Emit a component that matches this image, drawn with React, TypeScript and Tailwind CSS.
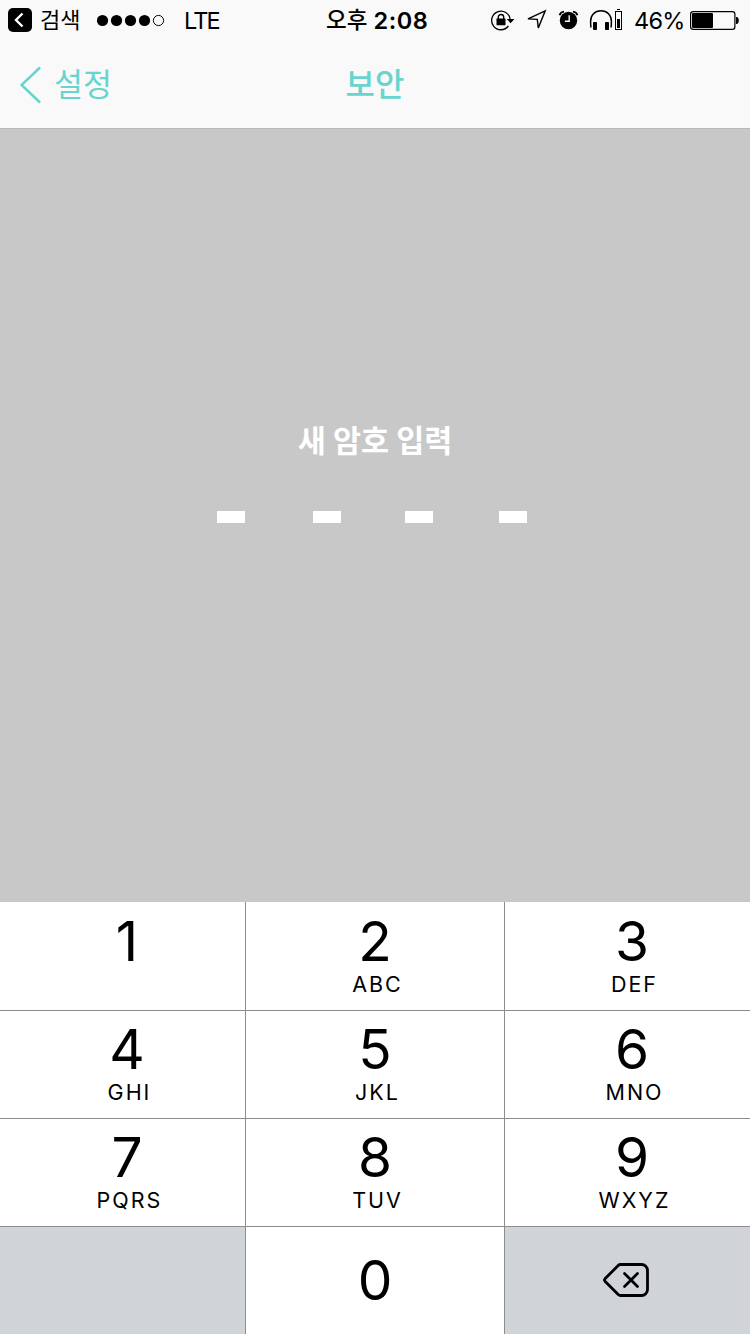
import React from "react";

type KeyDef = { digit: string; letters?: string };

const ROWS: KeyDef[][] = [
  [{ digit: "1" }, { digit: "2", letters: "ABC" }, { digit: "3", letters: "DEF" }],
  [{ digit: "4", letters: "GHI" }, { digit: "5", letters: "JKL" }, { digit: "6", letters: "MNO" }],
  [{ digit: "7", letters: "PQRS" }, { digit: "8", letters: "TUV" }, { digit: "9", letters: "WXYZ" }],
];

const COLUMN_PADDING = ["pl-[9px]", "", "pl-[9px]"];
const ROW_PADDING = ["pt-[11px]", "pt-[10px]", "pt-[10px]"];

function StatusIcons() {
  return (
    <svg className="block h-10 w-[134px] shrink-0" viewBox="490 0 134 40" fill="none" stroke="#000">
      {/* rotation lock */}
      <path d="M508.400 26A9.300 9.300 0 1 1 510.200 19.500" strokeWidth="1.300" />
      <path d="M506.800 19h7.600l-3.800 4.200z" fill="#000" stroke="none" />
      <path d="M498.300 19v-1.800a2.700 2.700 0 0 1 5.400 0V19" strokeWidth="1.400" />
      <rect x="496.500" y="18.600" width="9" height="6.600" rx="0.600" fill="#000" stroke="none" />
      {/* location */}
      <path d="M545.200 10.800 528 18.900l9.300.5 1 8.600z" strokeWidth="1.400" strokeLinejoin="miter" />
      {/* alarm */}
      <circle cx="568.500" cy="20.500" r="8.700" fill="#000" stroke="none" />
      <path d="M559.600 15.200a5 5 0 0 1 4.400-3.600M577.400 15.200a5 5 0 0 0-4.400-3.600" strokeWidth="1.800" />
      <path d="M569.200 15.200v6.100h-4.300" stroke="#f9f9f9" strokeWidth="1.400" />
      {/* headphones */}
      <path d="M591 27.500c-.3-1.700-.4-3.600-.4-6.200 0-6.300 4.200-10.500 10.400-10.500s10.400 4.200 10.400 10.500c0 2.600-.1 4.500-.4 6.200" strokeWidth="1.500" />
      <rect x="593" y="22" width="4" height="8" rx="0.800" fill="#000" stroke="none" />
      <rect x="605" y="22" width="4" height="8" rx="0.800" fill="#000" stroke="none" />
      <rect x="615.500" y="11.500" width="6" height="18" strokeWidth="1" />
      <path d="M617 9.500h3" strokeWidth="1" />
      <rect x="617" y="19" width="3" height="9" fill="#000" stroke="none" />
    </svg>
  );
}

function Battery() {
  return (
    <svg className="block h-10 w-[50px] shrink-0" viewBox="690 0 50 40" fill="none" stroke="#000">
      <rect x="690.600" y="11.600" width="44.300" height="17.800" rx="2.600" strokeWidth="1.200" />
      <rect x="692" y="13" width="21" height="15" rx="1" fill="#000" stroke="none" />
      <path d="M736 17h.5c1.500 0 2.300 1.500 2.300 3.500s-.8 3.500-2.300 3.500h-.5z" fill="#000" stroke="none" />
    </svg>
  );
}

function StatusBar() {
  return (
    <div className="flex h-10 items-center whitespace-nowrap pl-2 text-black">
      <svg className="h-6 w-6 shrink-0" viewBox="0 0 24 24" fill="none">
        <rect width="24" height="24" rx="5" fill="#000" />
        <path d="M14.500 5.500 8 12l6.500 6.500" stroke="#fff" strokeWidth="2.400" />
      </svg>
      <span className="ml-2 w-[57px] shrink-0 text-[22px] leading-10">검색</span>
      <svg className="h-10 w-[68px] shrink-0" viewBox="97 0 68 40">
        <circle cx="102.500" cy="20.500" r="5.600" />
        <circle cx="116.500" cy="20.500" r="5.600" />
        <circle cx="130.500" cy="20.500" r="5.600" />
        <circle cx="144.500" cy="20.500" r="5.600" />
        <circle cx="158.500" cy="20.500" r="5.100" fill="none" stroke="#000" />
      </svg>
      <span className="ml-[19px] w-[142px] shrink-0 pt-[2px] text-[23.500px] leading-10 tracking-[-1.900px]">LTE</span>
      <span className="flex w-[164px] shrink-0 items-center leading-10">
        <span className="text-[22.500px] font-medium">오후</span>
        <span className="ml-[6px] pt-[2px] text-[23.500px] font-semibold tracking-[0.600px]">2:08</span>
      </span>
      <StatusIcons />
      <span className="ml-[10px] w-14 shrink-0 pt-[2px] text-[23.500px] leading-10 tracking-[-0.700px]">46%</span>
      <Battery />
    </div>
  );
}

function Header() {
  return (
    <header className="h-[129px] border-b border-[#b9b9b9] bg-[#f9f9f9]">
      <StatusBar />
      <div className="grid h-[88px] grid-cols-3 items-center pt-[2px] text-[#68d4cf]">
        <button className="flex items-center pl-5 text-[31.500px] leading-10">
          <svg className="h-[38px] w-[21px]" viewBox="0 0 21 38" fill="none">
            <path d="M20 1.500 1.500 19 20 36.500" stroke="currentColor" strokeWidth="2.600" />
          </svg>
          <span className="ml-[13px]">설정</span>
        </button>
        <h1 className="text-center text-[32px] font-medium leading-10">보안</h1>
      </div>
    </header>
  );
}

function PasscodePanel() {
  return (
    <main className="flex flex-1 flex-col items-center bg-[#c8c8c8] pt-[292px]">
      <p className="text-[30.500px] font-bold leading-10 text-white">새 암호 입력</p>
      <div className="mr-[6px] mt-[50px] flex">
        <span className="h-3 w-7 bg-white" />
        <span className="ml-[68px] h-3 w-7 bg-white" />
        <span className="ml-16 h-3 w-7 bg-white" />
        <span className="ml-[66px] h-3 w-7 bg-white" />
      </div>
    </main>
  );
}

function Keypad() {
  return (
    <div className="grid h-[432px] grid-cols-[245px_258px_245px] grid-rows-[108px_107px_107px_107px] gap-px bg-[#8c8c8c]">
      {ROWS.map((row, rowIndex) =>
        row.map((key, column) => (
          <button
            key={key.digit}
            className={`flex flex-col items-center bg-white text-black ${ROW_PADDING[rowIndex]} ${COLUMN_PADDING[column]}`}
          >
            <span className="pr-px text-[55px] leading-[56px] tracking-[-1px]">{key.digit}</span>
            {key.letters && (
              <span className="mt-1 pl-[5px] text-[21.500px] leading-[22px] tracking-[2px]">{key.letters}</span>
            )}
          </button>
        )),
      )}
      <div className="bg-[#d0d3d8]" />
      <button className="flex justify-center bg-white pr-px pt-[25px] text-[55px] leading-[56px] tracking-[-1px] text-black">0</button>
      <button className="flex justify-center bg-[#d0d3d8] pr-[3px] pt-9" aria-label="삭제">
        <svg className="h-[34px] w-[46px]" viewBox="0 0 46 34" fill="none" stroke="#000">
          <path
            d="M17.500 1.500H38.500a6 6 0 0 1 6 6v19a6 6 0 0 1-6 6H17.500q-1.300 0-2.300-1L2 18.200q-1-1.200 0-2.400L15.200 2.500q1-1 2.300-1z"
            strokeWidth="2.800"
          />
          <path d="m21.500 10.500 13 13M34.500 10.500l-13 13" strokeWidth="2.800" strokeLinecap="round" />
        </svg>
      </button>
    </div>
  );
}

export default function App() {
  return (
    <div className="flex h-[1334px] w-[750px] flex-col overflow-hidden font-['Inter','Noto_Sans_CJK_KR',sans-serif]">
      <Header />
      <PasscodePanel />
      <Keypad />
    </div>
  );
}
